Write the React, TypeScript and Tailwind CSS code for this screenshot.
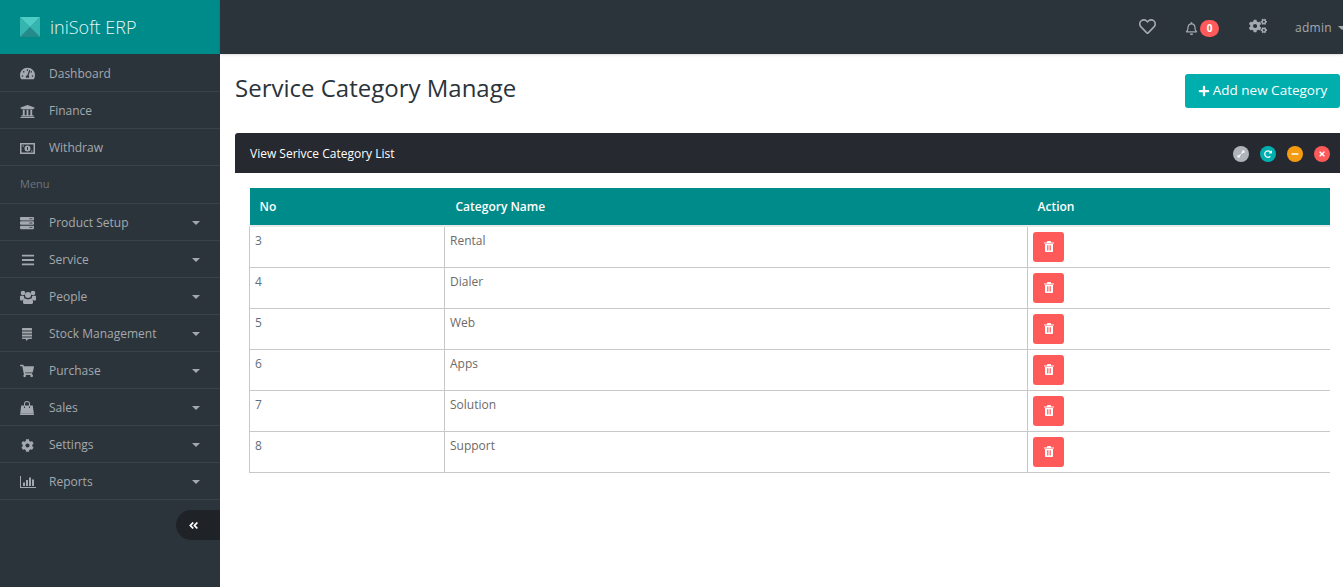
import {
  FaBars,
  FaCog,
  FaCogs,
  FaExpandAlt,
  FaMinus,
  FaPlus,
  FaRedoAlt,
  FaServer,
  FaShoppingCart,
  FaTachometerAlt,
  FaTimes,
  FaUniversity,
  FaAngleDoubleLeft,
} from "react-icons/fa";
import { FaRegBell, FaRegHeart } from "react-icons/fa";

const MoneyIcon = () => (
  <svg width="15" height="11" viewBox="0 0 15 11" fill="currentColor">
    <path
      fillRule="evenodd"
      d="M0 0H15V11H0ZM1.5 1.5V9.5H13.5V1.5ZM7.5 2.5A3 3 0 1 1 7.5 8.5A3 3 0 1 1 7.5 2.5Z"
    />
    <path d="M2.5 2.5H4V3.5H2.5ZM11 7.5H12.5V8.5H11Z" />
    <path d="M7 4H8V7H7Z" fill="#2c343b" />
  </svg>
);

const UsersIcon = () => (
  <svg width="16" height="14" viewBox="0 0 16 14" fill="currentColor">
    <circle cx="3" cy="3" r="2.3" />
    <circle cx="13" cy="3" r="2.3" />
    <circle cx="8" cy="5" r="3" />
    <path d="M0 6.2C1 5.6 2.6 5.6 4 6.2C4 7.6 4.3 8.4 5 9.3C3.6 9.4 2.8 10 2.4 10.4H1C.3 10.4 0 10 0 9.4Z" />
    <path d="M16 6.2C15 5.6 13.4 5.6 12 6.2C12 7.6 11.7 8.4 11 9.3C12.4 9.4 13.2 10 13.6 10.4H15C15.7 10.4 16 10 16 9.4Z" />
    <path d="M5 8.6C6 9.6 10 9.6 11 8.6C12.4 8.8 13 10 13 11.4V12.6C13 13.4 12.5 14 11.8 14H4.2C3.5 14 3 13.4 3 12.6V11.4C3 10 3.6 8.8 5 8.6Z" />
  </svg>
);

const StockIcon = () => (
  <svg width="10" height="13" viewBox="0 0 10 13" fill="currentColor">
    <path d="M1 0H9C9.6 0 10 .4 10 1V2.5H0V1C0 .4.4 0 1 0Z" />
    <path d="M0 3.5H10V5.5H0Z" />
    <path d="M0 6.5H10V8.5H0Z" />
    <path d="M0 9.5H10V10C10 10.6 9.6 11 9 11H6.5L4 13V11H1C.4 11 0 10.6 0 10Z" />
  </svg>
);

const BagIcon = () => (
  <svg width="14" height="14" viewBox="0 0 14 14" fill="currentColor">
    <path
      fillRule="evenodd"
      d="M1.2 4.5H12.8L14 14H0ZM4 5.5V7H5V5.5ZM9 5.5V7H10V5.5Z"
    />
    <path d="M4 5V3A3 3 0 0 1 10 3V5H9V3A2 2 0 0 0 5 3V5Z" />
    <path d="M0 12.6H14V13H0Z" fill="#2c343b" opacity="0.5" />
  </svg>
);

const ReportsIcon = () => (
  <svg width="16" height="12" viewBox="0 0 16 12" fill="currentColor">
    <path d="M0 0H1V11H16V12H0Z" />
    <path d="M3 6.5H5V10H3ZM6 4H8V10H6ZM9 1.5H11V10H9ZM12 3.5H14V10H12Z" />
  </svg>
);

const TrashIcon = () => (
  <svg width="10" height="11" viewBox="0 0 10 11" fill="currentColor">
    <path d="M3.4 0H6.6L7.2 1.4H10V2.4H0V1.4H2.8Z" />
    <path
      fillRule="evenodd"
      d="M1 3H9V10C9 10.6 8.6 11 8 11H2C1.4 11 1 10.6 1 10ZM3 4.2V9.6H3.8V4.2ZM4.6 4.2V9.6H5.4V4.2ZM6.2 4.2V9.6H7V4.2Z"
    />
  </svg>
);

const topLinks = [
  { label: "Dashboard", icon: <FaTachometerAlt className="text-[15px]" />, height: "h-[38px]" },
  { label: "Finance", icon: <FaUniversity className="text-[15px]" />, height: "h-[37px]" },
  { label: "Withdraw", icon: <MoneyIcon />, height: "h-[37px]" },
];

const menuLinks = [
  { label: "Product Setup", icon: <FaServer className="text-[14px]" /> },
  { label: "Service", icon: <FaBars className="ml-px text-[14px]" /> },
  { label: "People", icon: <UsersIcon /> },
  { label: "Stock Management", icon: <span className="ml-[2px] flex"><StockIcon /></span> },
  { label: "Purchase", icon: <FaShoppingCart className="text-[14px]" /> },
  { label: "Sales", icon: <BagIcon /> },
  { label: "Settings", icon: <FaCog className="ml-px text-[13px]" /> },
  { label: "Reports", icon: <ReportsIcon /> },
];

const categories = [
  { no: 3, name: "Rental" },
  { no: 4, name: "Dialer" },
  { no: 5, name: "Web" },
  { no: 6, name: "Apps" },
  { no: 7, name: "Solution" },
  { no: 8, name: "Support" },
];

const SideLink = ({ label, icon, caret, height = "h-[37px]" }) => (
  <a
    className={`flex items-center border-b border-[#3a424a] pl-5 pr-5 pt-[2px] text-[12px] text-[#a3a9ae] ${height}`}
  >
    <span className="flex w-[29px] shrink-0 items-center">{icon}</span>
    <span className="flex-1">{label}</span>
    {caret && (
      <span className="h-0 w-0 border-x-[4px] border-t-[4px] border-x-transparent border-t-[#a3a9ae]" />
    )}
  </a>
);

const PanelDot = ({ color, children }) => (
  <span
    className={`flex h-4 w-4 items-center justify-center rounded-full text-[8px] text-white ${color}`}
  >
    {children}
  </span>
);

const App = () => {
  return (
    <div className="flex h-[587px] w-[1343px] overflow-hidden bg-white font-['Open_Sans',sans-serif]">
      <aside className="flex w-[220px] shrink-0 flex-col bg-[#2c343b]">
        <div className="flex h-[54px] shrink-0 items-center bg-[#008b8b] pl-5">
          <svg width="20" height="20" viewBox="0 0 20 20" className="mr-[10px]">
            <rect width="20" height="20" fill="#2a9d9d" />
            <path d="M0 0H20L10 10Z" fill="#4ecdc4" />
            <path d="M0 0L10 10L0 20Z" fill="#36b5b0" />
            <path d="M20 0L10 10L20 20Z" fill="#36b5b0" />
            <path d="M0 20L10 10L20 20Z" fill="#258a8a" />
          </svg>
          <span className="text-[18px] font-light text-[#e6f5f5]">iniSoft ERP</span>
        </div>
        {topLinks.map((link) => (
          <SideLink
            key={link.label}
            label={link.label}
            icon={link.icon}
            height={link.height}
            caret={false}
          />
        ))}
        <div className="flex h-[38px] items-center border-b border-[#3a424a] pl-5 text-[11px] text-[#6d747b]">
          Menu
        </div>
        {menuLinks.map((link) => (
          <SideLink key={link.label} label={link.label} icon={link.icon} caret />
        ))}
        <div className="mt-[10px] flex justify-end">
          <div className="flex h-[30px] w-[44px] items-center rounded-l-full bg-[#1f2328] pl-[12px] text-[11px] text-white">
            <FaAngleDoubleLeft />
          </div>
        </div>
      </aside>

      <div className="flex min-w-0 flex-1 flex-col">
        <header className="flex h-[54px] shrink-0 items-center justify-end bg-[#2c343b] text-[#a3a9ae] shadow-sm">
          <FaRegHeart className="mb-[2px] mr-[29px] text-[17px]" />
          <FaRegBell className="mr-[2px] mt-[2px] text-[13px]" />
          <span className="mr-[30px] mt-[3px] flex h-[17px] w-[19px] items-center justify-center rounded-full bg-[#ff5a5a] text-[10px] font-bold text-white">
            0
          </span>
          <FaCogs className="mb-[2px] mr-[28px] text-[18px]" />
          <span className="mr-[6px] mt-[2px] text-[12px] tracking-[0.3px]">admin</span>
          <span className="mr-[-3px] mt-[2px] h-0 w-0 border-x-[4px] border-t-[4px] border-x-transparent border-t-[#a3a9ae]" />
        </header>

        <main className="pl-[15px] pr-[3px]">
          <div className="flex h-[79px] items-start justify-between">
            <h1 className="mt-[16px] text-[24px] leading-[36px] text-[#2b333b]">
              Service Category Manage
            </h1>
            <button className="mt-5 flex h-[34px] w-[155px] items-center justify-center rounded-[3px] bg-[#00aeae] pb-[2px] text-[13.5px] text-white">
              <FaPlus className="mr-[3px] mt-[2px] text-[12px]" />
              Add new Category
            </button>
          </div>

          <div className="flex h-10 items-center justify-between rounded-tl-[3px] bg-[#262a30] pl-[15px] pr-[10px] pt-px text-[12px] font-medium text-white">
            <span>View Serivce Category List</span>
            <div className="flex gap-[11px]">
              <PanelDot color="bg-[#aeb4ba]">
                <FaExpandAlt />
              </PanelDot>
              <PanelDot color="bg-[#00aeae]">
                <FaRedoAlt />
              </PanelDot>
              <PanelDot color="bg-[#f39c12]">
                <FaMinus />
              </PanelDot>
              <PanelDot color="bg-[#ff5a5a]">
                <FaTimes />
              </PanelDot>
            </div>
          </div>

          <div className="pl-[14px] pr-[10px] pt-[15px]">
            <table className="w-[1081px] table-fixed border-collapse text-[12px] text-[#6b6f73]">
              <thead>
                <tr className="h-[38px] border-b-2 border-[#e6eaea] bg-[#008b8b] text-left text-white">
                  <th className="w-[195px] pl-[10px] font-semibold">No</th>
                  <th className="w-[583px] pl-[11px] font-semibold">Category Name</th>
                  <th className="pl-[10px] font-semibold">Action</th>
                </tr>
              </thead>
              <tbody>
                {categories.map((row) => (
                  <tr key={row.no} className="h-[41px] border-b border-[#c8c8c8]">
                    <td className="border-x border-[#c8c8c8] pb-[14px] pl-[5px] pt-[5px] align-top text-[#5f6f7c]">
                      {row.no}
                    </td>
                    <td className="border-x border-[#c8c8c8] pb-[14px] pl-[5px] pt-[5px] align-top text-[#6e6a66]">
                      {row.name}
                    </td>
                    <td className="border-l border-[#c8c8c8] pl-[5px] align-middle">
                      <button className="flex h-[30px] w-[31px] items-center justify-center rounded-[3px] bg-[#ff5a5a] text-white">
                        <TrashIcon />
                      </button>
                    </td>
                  </tr>
                ))}
              </tbody>
            </table>
          </div>
        </main>
      </div>
    </div>
  );
};

export default App;
